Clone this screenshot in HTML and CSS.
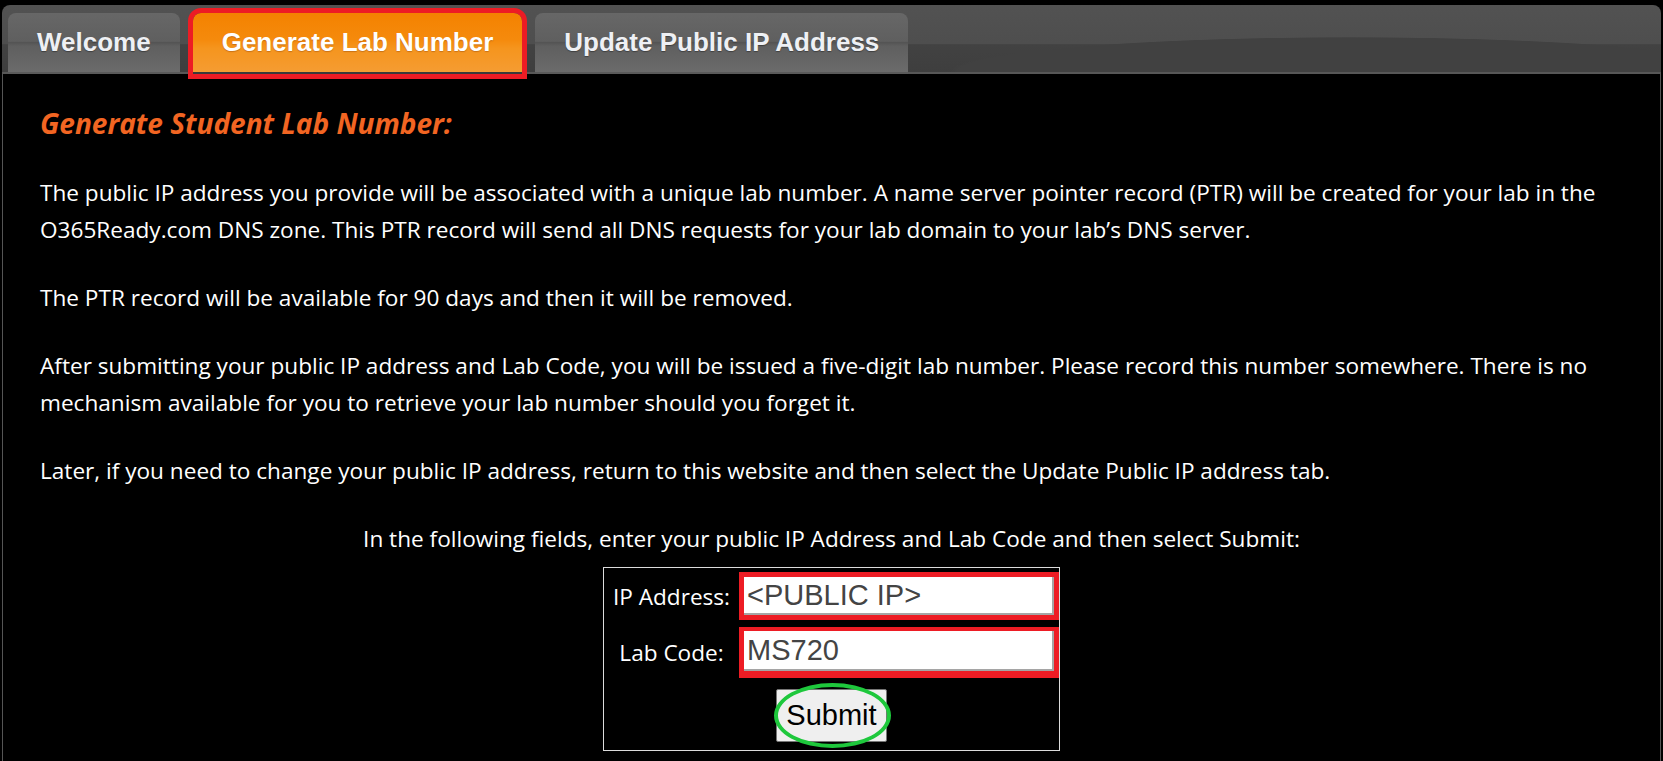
FILE: index.html
```html
<!DOCTYPE html>
<html lang="en">
<head>
<meta charset="utf-8">
<title>Generate Lab Number</title>
<link rel="stylesheet" href="styles.css">
</head>
<body>
<div class="page">
  <nav class="tabbar">
    <a class="tab">Welcome</a>
    <a class="tab active">Generate Lab Number</a>
    <a class="tab">Update Public IP Address</a>
  </nav>
  <main class="content">
    <h1 class="title">Generate Student Lab Number:</h1>
    <p class="para">The public IP address you provide will be associated with a unique lab number. A name server pointer record (PTR) will be created for your lab in the O365Ready.com DNS zone. This PTR record will send all DNS requests for your lab domain to your lab’s DNS server.</p>
    <p class="para">The PTR record will be available for 90 days and then it will be removed.</p>
    <p class="para">After submitting your public IP address and Lab Code, you will be issued a five-digit lab number. Please record this number somewhere. There is no mechanism available for you to retrieve your lab number should you forget it.</p>
    <p class="para">Later, if you need to change your public IP address, return to this website and then select the Update Public IP address tab.</p>
    <p class="para center">In the following fields, enter your public IP Address and Lab Code and then select Submit:</p>
    <form class="labform">
      <label class="lbl" for="ip">IP Address:</label>
      <span class="hl"><input class="field field-ip" id="ip" type="text" value="&lt;PUBLIC IP&gt;"></span>
      <label class="lbl" for="code">Lab Code:</label>
      <span class="hl hl-low"><input class="field" id="code" type="text" value="MS720"></span>
      <span class="submit-wrap"><button class="submit" type="button">Submit</button></span>
    </form>
  </main>
</div>
</body>
</html>
```
FILE: styles.css
```css
html, body {
  margin: 0;
  padding: 0;
  background: #000;
}
body {
  font-family: "Open Sans", "Noto Sans", sans-serif;
  color: #fff;
  height: 761px;
  overflow: hidden;
}
.page {
  margin: 5px 2px 0 2px;
}
.tabbar {
  height: 69px;
  box-sizing: border-box;
  display: flex;
  align-items: flex-end;
  gap: 13px;
  padding-left: 6px;
  border-radius: 8px 8px 0 0;
  background:
    radial-gradient(ellipse 400px 35px at 1348px 67px, #414141 98%, rgba(65,65,65,0) 100%),
    linear-gradient(#525252 0, #4e4e4e 56%, #424242 57.5%, #3e3e3e 100%);
  box-shadow: inset 0 -2px 0 #575757;
}
.tab {
  height: 61px;
  box-sizing: border-box;
  padding: 0 29px;
  display: flex;
  align-items: center;
  border-radius: 8px 8px 0 0;
  font-family: "Liberation Sans", Arial, sans-serif;
  font-weight: bold;
  font-size: 26px;
  color: #eef0f4;
  text-shadow: 0 1px 1px rgba(0,0,0,0.35);
  background: linear-gradient(#676767 0, #5f5f5f 48%, #545454 50%, #5f5f5f 56%, #6b6b6b 100%);
  border-bottom: 2px solid #5a5a5a;
  cursor: pointer;
}
.tab.active {
  color: #fff;
  background: linear-gradient(#f48200 0, #f58a0c 45%, #f5951e 60%, #f59c32 100%);
  border-bottom: 2px solid #3a3a3a;
  outline: 5px solid #ed1c24;
  text-shadow: 0 1px 1px rgba(120,50,0,0.35);
}
.content {
  box-sizing: border-box;
  min-height: 687px;
  border-left: 1px solid #555;
  border-right: 1px solid #555;
  padding: 32px 37px 0 37px;
}
.title {
  margin: 0 0 34px;
  font-size: 28px;
  line-height: 34px;
  font-weight: bold;
  font-style: italic;
  color: #f26522;
}
.para {
  margin: 31px 0 0;
  font-size: 22.6px;
  line-height: 37px;
}
.title + .para {
  margin-top: 0;
}
.center {
  text-align: center;
}
.labform {
  width: 457px;
  box-sizing: border-box;
  margin: 10px auto 0;
  border: 1px solid #dcdcdc;
  padding: 4px 1px 8px 0;
  display: grid;
  grid-template-columns: 135px 320px;
  row-gap: 7px;
  align-items: center;
}
.lbl {
  font-size: 22.6px;
  text-align: center;
  color: #fff;
}
.hl {
  display: block;
  border: 5px solid #ed1c24;
}
.hl-low {
  border-top-width: 4px;
  border-bottom-width: 7px;
}
.field {
  display: block;
  width: 100%;
  height: 40px;
  box-sizing: border-box;
  margin: 0;
  padding: 0 0 0 3px;
  border: 0;
  border-right: 2px solid #a5a5a5;
  border-bottom: 2px solid #a5a5a5;
  background: #fff;
  font-family: "Liberation Sans", Arial, sans-serif;
  font-size: 29px;
  color: #444;
  outline: none;
}
.field-ip {
  height: 38px;
}
.submit-wrap {
  grid-column: 1 / span 2;
  justify-self: center;
  position: relative;
  margin-top: 4px;
  display: block;
}
.submit {
  display: block;
  width: 111px;
  height: 53px;
  padding: 0;
  border: 1px solid #767676;
  border-radius: 2px;
  background: #efefef;
  font-family: "Liberation Sans", Arial, sans-serif;
  font-size: 29px;
  color: #000;
}
.submit-wrap::after {
  content: "";
  position: absolute;
  left: -2px;
  right: -4px;
  top: -6px;
  bottom: -6px;
  border: 4px solid #1ec83c;
  border-radius: 50% / 50%;
  pointer-events: none;
}
```
